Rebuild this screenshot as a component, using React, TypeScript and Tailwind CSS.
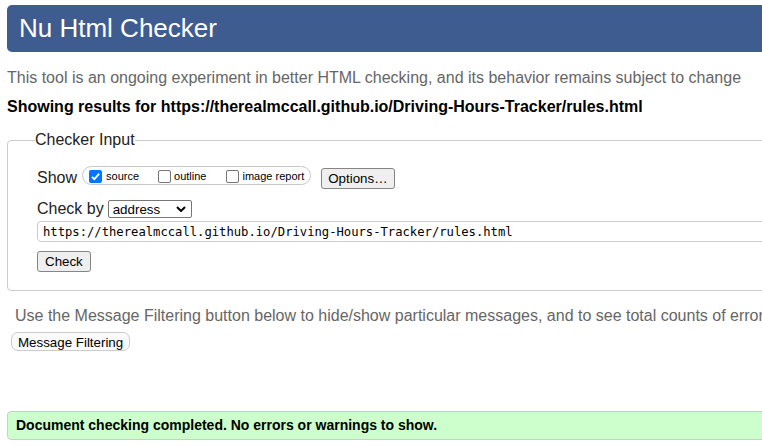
const Box = ({ checked }: { checked?: boolean }) =>
  checked ? (
    <span className="inline-flex h-[13px] w-[13px] shrink-0 items-center justify-center self-center rounded-[2px] bg-[#0075ff]">
      <svg viewBox="0 0 13 13" className="h-[13px] w-[13px]">
        <path d="M3 6.8 L5.4 9.2 L10.2 3.6" fill="none" stroke="#fff" strokeWidth="1.8" />
      </svg>
    </span>
  ) : (
    <span className="inline-block h-[13px] w-[13px] shrink-0 self-center rounded-[2px] border border-[#767676] bg-white" />
  );

const App = () => {
  return (
    <div className="h-[446px] w-[762px] overflow-hidden bg-white font-['Liberation_Sans',Arial,sans-serif] text-[#222]">
      <div className="w-[900px] pl-[7px] pt-[5px] whitespace-nowrap">
        <div className="flex h-[47px] items-center rounded-l-[5px] bg-[#3e5c90] pl-[12px] text-[26px] text-white">
          Nu Html Checker
        </div>

        <p className="mt-[17px] text-[16px] leading-[18px] text-[#666]">
          This tool is an ongoing experiment in better HTML checking, and its behavior remains subject to change
        </p>
        <p className="mt-[11px] text-[16px] font-bold leading-[18px] text-black">
          Showing results for https://therealmccall.github.io/Driving-Hours-Tracker/rules.html
        </p>

        <fieldset className="mt-[15px] rounded-l-[4px] border border-[#ccc] pb-[17px] pl-[29px]">
          <legend className="-ml-[2px] text-[16px] leading-[18px] text-[#222]">Checker Input</legend>

          <div className="mt-[17px] flex items-baseline">
            <span className="text-[16px] leading-[18px]">Show</span>
            <div className="ml-[5px] flex h-[19px] items-center rounded-full border border-[#c8c8c8] pl-[6px] pr-[6px] pt-[1px] text-[11px] text-black">
              <Box checked />
              <span className="ml-[4px]">source</span>
              <span className="ml-[19px] flex items-center">
                <Box />
                <span className="ml-[3px]">outline</span>
              </span>
              <span className="ml-[20px] flex items-center">
                <Box />
                <span className="ml-[3px]">image report</span>
              </span>
            </div>
            <button className="ml-[10px] h-[21px] rounded-[3px] border border-[#858585] bg-[#efefef] px-[6px] text-[13.33px] text-black">
              Options…
            </button>
          </div>

          <div className="mt-[11px] flex items-baseline">
            <span className="text-[16px] leading-[18px]">Check by</span>
            <div className="ml-[4px] inline-flex h-[18px] w-[84px] items-center justify-between rounded-[2px] border border-[#767676] bg-white pl-[4px] pr-[5px] text-[13.33px] text-black">
              <span>address</span>
              <svg viewBox="0 0 10 6" className="h-[6px] w-[10px]">
                <path d="M1 1 L5 5 L9 1" fill="none" stroke="#000" strokeWidth="2" />
              </svg>
            </div>
          </div>

          <div className="mt-[3px] flex h-[21px] items-center rounded-l-[4px] border border-[#ccc] pl-[5px] font-['DejaVu_Sans_Mono',monospace] text-[12.2px] text-black">
            https://therealmccall.github.io/Driving-Hours-Tracker/rules.html
          </div>

          <button className="mt-[9px] h-[21px] rounded-[3px] border border-[#858585] bg-[#efefef] px-[7px] text-[13.33px] text-black">
            Check
          </button>
        </fieldset>

        <div className="pl-[4px]">
          <p className="ml-[4px] mt-[16px] text-[16px] leading-[18px] text-[#666]">
            Use the Message Filtering button below to hide/show particular messages, and to see total counts of errors and warnings.
          </p>
          <button className="mt-[7px] h-[19px] rounded-[7px] border border-[#ccc] bg-[#fafafa] px-[6px] text-[13.33px] text-black">
            Message Filtering
          </button>
        </div>

        <div className="mt-[57px] flex h-[29px] items-center rounded-l-[4px] border border-[#ccc] bg-[#ccffcc] pl-[8px] text-[14px] font-bold text-black">
          Document checking completed. No errors or warnings to show.
        </div>
      </div>
    </div>
  );
};

export default App;
